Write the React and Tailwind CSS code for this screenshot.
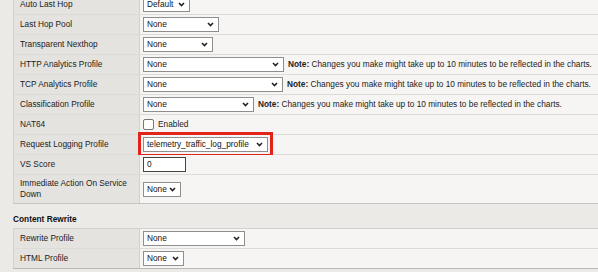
import React from "react";

const Chevron = () => (
  <svg width="7" height="5" viewBox="0 0 7 5" className="shrink-0">
    <path d="M1 1l2.5 2.5L6 1" fill="none" stroke="#222" strokeWidth="1.6" />
  </svg>
);

function Select({ value, w, red }) {
  return (
    <div
      className={`flex items-center justify-between h-[15px] bg-white border border-[#8e8e8e] pl-[3px] pr-[4px] text-[8.3px] text-[#111] leading-none ${w} ${
        red ? "outline-[3px] outline-solid outline-[#e2231a] outline-offset-[2px]" : ""
      }`}
    >
      <span className="whitespace-nowrap">{value}</span>
      <Chevron />
    </div>
  );
}

const Note = () => (
  <span className="ml-[4px] text-[8.3px] text-[#222] whitespace-nowrap">
    <b>Note: </b>
    Changes you make might take up to 10 minutes to be reflected in the charts.
  </span>
);

function Row({ label, children, h = "h-[20px]", last }) {
  return (
    <div className={`flex ${h} ${last ? "" : "border-b border-[#dcdbd7]"}`}>
      <div className="w-[126px] shrink-0 bg-[#e4e3df] border-r border-[#d2d1cd] pl-[6px] flex items-center text-[8.3px] leading-[11px] text-[#222]">
        {label}
      </div>
      <div className="flex-1 bg-[#f6f5f3] pl-[3px] flex items-center">{children}</div>
    </div>
  );
}

export default function App() {
  return (
    <div className="w-[598px] h-[272px] overflow-hidden bg-[#ebeae7] font-['Liberation_Sans',Arial,sans-serif]">
      <div className="ml-[13px] -mt-[5px] border-l border-[#d2d1cd] border-b border-b-[#c4c3bf]">
        <Row label="Auto Last Hop">
          <Select value="Default" w="w-[47px]" />
        </Row>
        <Row label="Last Hop Pool">
          <Select value="None" w="w-[76px]" />
        </Row>
        <Row label="Transparent Nexthop">
          <Select value="None" w="w-[70px]" />
        </Row>
        <Row label="HTTP Analytics Profile">
          <Select value="None" w="w-[141px]" />
          <Note />
        </Row>
        <Row label="TCP Analytics Profile">
          <Select value="None" w="w-[140px]" />
          <Note />
        </Row>
        <Row label="Classification Profile">
          <Select value="None" w="w-[111px]" />
          <Note />
        </Row>
        <Row label="NAT64">
          <span className="w-[11px] h-[11px] border border-[#777] rounded-[2px] bg-white" />
          <span className="ml-[4px] text-[8.3px] text-[#222]">Enabled</span>
        </Row>
        <Row label="Request Logging Profile">
          <Select value="telemetry_traffic_log_profile" w="w-[125px]" red />
        </Row>
        <Row label="VS Score">
          <div className="w-[43px] h-[15px] bg-white border-[1.5px] border-[#444] pl-[3px] flex items-center text-[8.3px] leading-none text-[#111]">
            0
          </div>
        </Row>
        <Row
          h="h-[28px]"
          last
          label={
            <span>
              Immediate Action On Service
              <br />
              Down
            </span>
          }
        >
          <Select value="None" w="w-[38px]" />
        </Row>
      </div>
      <div className="h-[24px] pl-[13px] flex items-center pt-[6px] text-[8.3px] font-bold text-[#111]">
        Content Rewrite
      </div>
      <div className="ml-[13px] border-t border-[#c4c3bf] border-l border-[#d2d1cd] border-b border-b-[#b9b8b4]">
        <Row label="Rewrite Profile">
          <Select value="None" w="w-[102px]" />
        </Row>
        <Row label="HTML Profile" h="h-[19px]" last>
          <Select value="None" w="w-[41px]" />
        </Row>
      </div>
    </div>
  );
}
